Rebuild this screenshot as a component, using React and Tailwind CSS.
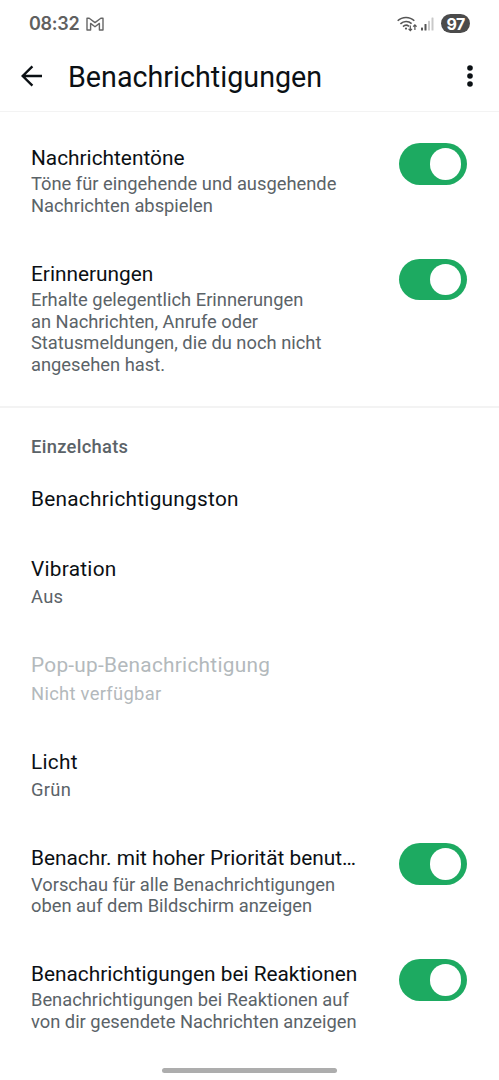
function GmailIcon() {
  return (
    <svg className="h-[14px] w-[18px]" viewBox="0 0 18 14" fill="none" stroke="#666" strokeWidth="1.4" strokeLinejoin="round">
      <path d="M1 13V1.2h2.2L9 5.6l5.8-4.4H17V13h-3.6V6.4L9 9.8 4.6 6.4V13z" />
    </svg>
  );
}

function WifiIcon() {
  return (
    <svg className="h-[16px] w-[21px]" viewBox="0 0 21 16" fill="none" stroke="#555" strokeWidth="1.6">
      <path d="M.7 4.8c4.6-4.5 12-4.5 16.6 0" />
      <path d="M3.4 7.9c3.3-3.2 8-3.2 11.2-.2" />
      <path d="M6 10.6c1.8-1.7 4.2-1.7 6-.2" />
      <circle cx="9" cy="12.6" r="1.1" fill="#555" stroke="none" />
      <path d="M13.3 9.4v5M11.6 12.8l1.7 1.9 1.7-1.9M17.9 14V9M16.2 10.7l1.7-1.9 1.7 1.9" strokeWidth="1.2" />
    </svg>
  );
}

function SignalIcon() {
  return (
    <svg className="h-[14px] w-[13px]" viewBox="0 0 13 14">
      <rect x="0" y="10.5" width="2" height="3" rx=".5" fill="#555" />
      <rect x="3.5" y="7" width="2" height="6.5" rx=".5" fill="#555" />
      <rect x="7" y="3.7" width="2" height="9.8" rx=".5" fill="#c9c9c9" />
      <rect x="10.5" y="0.5" width="2" height="13" rx=".5" fill="#c9c9c9" />
    </svg>
  );
}

function StatusBar() {
  return (
    <div className="flex h-12 items-center justify-between pr-[29px] pb-px pl-[29px] font-['Inter',sans-serif]">
      <div className="flex items-center gap-[7px]">
        <span className="text-[18px] font-semibold tracking-[-0.3px] text-[#606060]">08:32</span>
        <GmailIcon />
      </div>
      <div className="flex items-center">
        <WifiIcon />
        <span className="ml-[3px] flex">
          <SignalIcon />
        </span>
        <span className="ml-[7px] flex h-[19px] w-[29px] items-center justify-center rounded-full bg-[#4b4b4b] text-[16px] font-bold tracking-[-0.6px] text-white">
          97
        </span>
      </div>
    </div>
  );
}

function Header() {
  return (
    <header className="flex h-16 items-center border-b border-[#f3f3f3] pb-[7px] pl-[21px]">
      <button aria-label="Zurück">
        <svg className="h-[22px] w-[22px]" viewBox="0 0 22 22" fill="none" stroke="#0b1014" strokeWidth="2.4">
          <path d="M21 11H2M11.4 1.3L1.7 11l9.7 9.7" />
        </svg>
      </button>
      <h1 className="mt-px ml-[25px] text-[28.7px] leading-8 whitespace-nowrap">Benachrichtigungen</h1>
      <button aria-label="Weitere Optionen" className="mr-[26px] ml-auto">
        <svg className="h-[22px] w-[6px]" viewBox="0 0 6 22" fill="#0b1014">
          <circle cx="3" cy="3" r="2.8" />
          <circle cx="3" cy="11" r="2.8" />
          <circle cx="3" cy="19" r="2.8" />
        </svg>
      </button>
    </header>
  );
}

function Toggle() {
  return (
    <button
      role="switch"
      aria-checked="true"
      className="mt-[-2px] flex h-[41.5px] w-[67.5px] shrink-0 items-center justify-end rounded-full bg-[#1daa61] pr-[5.5px]"
    >
      <span className="h-[31.5px] w-[31.5px] rounded-full bg-white" />
    </button>
  );
}

function SwitchRow({ title, lines }) {
  return (
    <div className="flex items-start justify-between pt-[23px] pr-[32.5px] pb-[21.5px] pl-[31px]">
      <div className="whitespace-nowrap">
        <h2 className="text-[20.83px] leading-[26px]">{title}</h2>
        <p className="mt-[2.3px] text-[18.32px] leading-[21.5px] text-[#5b6368]">
          {lines.map((line) => (
            <span key={line} className="block">{line}</span>
          ))}
        </p>
      </div>
      <Toggle />
    </div>
  );
}

function ValueRow({ title, value, disabled }) {
  return (
    <div className={disabled ? 'h-[96.5px] pl-[31px] text-[#b3b9bc]' : 'h-[96.5px] pl-[31px]'}>
      <h2 className="text-[20.8px] leading-[26px] tracking-[0.27px]">{title}</h2>
      <p className={disabled ? 'mt-[2.5px] text-[18.35px] leading-[26px] tracking-[0.3px]' : 'mt-[2.5px] text-[18.35px] leading-[26px] tracking-[0.3px] text-[#5b6368]'}>
        {value}
      </p>
    </div>
  );
}

export default function App() {
  return (
    <div className="flex h-[1080px] w-[499px] flex-col overflow-hidden bg-white font-['Roboto',sans-serif] text-[#0b1014]">
      <StatusBar />
      <Header />
      <main>
        <section className="border-b-2 border-[#f3f3f3] pt-[10px] pb-[9.7px]">
          <SwitchRow title="Nachrichtentöne" lines={['Töne für eingehende und ausgehende', 'Nachrichten abspielen']} />
          <SwitchRow
            title="Erinnerungen"
            lines={[
              'Erhalte gelegentlich Erinnerungen',
              'an Nachrichten, Anrufe oder',
              'Statusmeldungen, die du noch nicht',
              'angesehen hast.',
            ]}
          />
        </section>
        <section>
          <h3 className="pt-[26px] pl-[31px] text-[18.35px] leading-[26px] font-medium tracking-[0.3px] text-[#5b6368]">Einzelchats</h3>
          <div className="pt-[26px] pb-[43.7px] pl-[31px] text-[20.8px] leading-[26px] tracking-[0.27px]">Benachrichtigungston</div>
          <ValueRow title="Vibration" value="Aus" />
          <ValueRow title="Pop-up-Benachrichtigung" value="Nicht verfügbar" disabled />
          <ValueRow title="Licht" value="Grün" />
          <div className="mt-[-23.2px]">
            <SwitchRow
              title="Benachr. mit hoher Priorität benut…"
              lines={['Vorschau für alle Benachrichtigungen', 'oben auf dem Bildschirm anzeigen']}
            />
            <SwitchRow
              title="Benachrichtigungen bei Reaktionen"
              lines={['Benachrichtigungen bei Reaktionen auf', 'von dir gesendete Nachrichten anzeigen']}
            />
          </div>
        </section>
      </main>
      <div className="mx-auto mt-auto mb-[7px] h-[5px] w-[175px] shrink-0 rounded-full bg-[#adadad]" />
    </div>
  );
}
